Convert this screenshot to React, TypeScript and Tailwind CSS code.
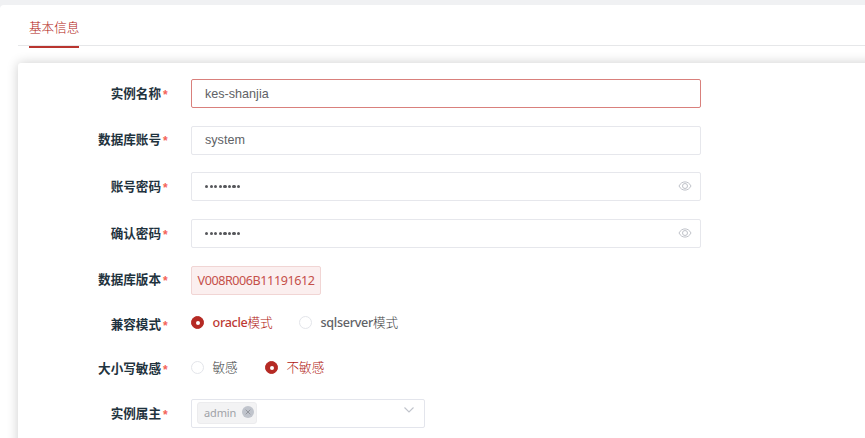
import React, { useState } from 'react';
import { clsx } from 'clsx';

interface FieldProps {
  label: string;
  className: string;
  raised?: boolean;
  children: React.ReactNode;
}

function Field({ label, className, raised, children }: FieldProps) {
  return (
    <div className={clsx('flex items-start', className)}>
      <div
        className={clsx(
          'flex w-[173px] shrink-0 items-center justify-end whitespace-nowrap pr-[22px] pt-[1px] text-[12.6px] font-bold text-[#1f333e]',
          raised ? 'h-[28.5px]' : 'h-[29px]'
        )}
      >
        {label}
        <span className="mb-[2px] ml-[2px] w-[6px] pt-[3px] font-['Liberation_Sans'] text-[12px] font-bold leading-none text-[#f4645a]">*</span>
      </div>
      {children}
    </div>
  );
}

function EyeIcon() {
  return (
    <svg viewBox="0 0 14 10" className="mb-[1px] h-[10px] w-[14px]" fill="none" stroke="#bfc2c9">
      <path d="M1 5C2.4 2.3 4.5 .9 7 .9S11.6 2.3 13 5C11.6 7.7 9.5 9.1 7 9.1S2.4 7.7 1 5Z" />
      <circle cx="7" cy="5" r="2.5" />
    </svg>
  );
}

interface InputProps {
  value: string;
  focused?: boolean;
  password?: boolean;
}

function Input({ value, focused, password }: InputProps) {
  return (
    <div
      className={clsx(
        'flex h-[29px] w-[510px] items-center justify-between rounded-[2px] border bg-white pl-[13px] pr-[8px]',
        focused ? 'border-[#d9807c] pt-[1px]' : 'border-[#e6e7ec]'
      )}
    >
      {password ? (
        <>
          <span className="flex gap-[1.4px]">
            {Array.from(value).map((_, i) => (
              <span key={i} className="h-[3.2px] w-[3.2px] rounded-full bg-[#56575b]" />
            ))}
          </span>
          <EyeIcon />
        </>
      ) : (
        <span className="font-['Liberation_Sans'] text-[12.6px] text-[#606266]">{value}</span>
      )}
    </div>
  );
}

interface RadioProps {
  label: string;
  checked: boolean;
  className?: string;
  onSelect: () => void;
}

function Radio({ label, checked, className, onSelect }: RadioProps) {
  return (
    <button onClick={onSelect} className={clsx('flex items-center whitespace-nowrap', className)}>
      <span
        className={clsx(
          'flex h-[13px] w-[13px] items-center justify-center rounded-full border',
          checked ? 'border-[#b52a24] bg-[#b52a24]' : 'border-[#e3e5ea] bg-white'
        )}
      >
        {checked && <span className="h-[4px] w-[4px] rounded-full bg-white" />}
      </span>
      <span className={clsx('ml-[8.5px] text-[12.6px] font-medium', checked ? 'text-[#bd3a34]' : 'text-[#606266]')}>
        <span className="tracking-[-0.3px]">{label.replace(/[^a-z]/g, '')}</span>
        <span className={clsx('font-light', checked ? 'text-[#b0150f]' : 'text-[#3c3e42]')}>{label.replace(/[a-z]/g, '')}</span>
      </span>
    </button>
  );
}

export default function App() {
  const [mode, setMode] = useState('oracle');
  const [sensitive, setSensitive] = useState(false);

  return (
    <div className="h-[438px] overflow-hidden bg-[#f0f1f3] pt-[5px] font-['Noto_Sans','Noto_Sans_CJK_SC',sans-serif]">
      <div className="h-full rounded-tl-[4px] bg-white pl-[18px]">
        {/* Tabs */}
        <div className="flex h-[41px] border-b border-[#e6e7e9] pl-[11px]">
          <div className="flex h-[43px] items-center border-b-2 border-[#b9352f] pt-[6px] text-[12.6px] font-light text-[#b0150f]">
            基本信息
          </div>
        </div>

        {/* Form */}
        <div className="-mr-[20px] mt-[17px] h-[400px] rounded-tl-[3px] bg-white pt-[16px] shadow-[0_0_12px_rgba(0,0,0,0.2)]">
          <Field label="实例名称" className="h-[47px]">
            <Input value="kes-shanjia" focused />
          </Field>
          <Field label="数据库账号" className="h-[46px]" raised>
            <Input value="system" />
          </Field>
          <Field label="账号密码" className="h-[47px]">
            <Input value="password" password />
          </Field>
          <Field label="确认密码" className="h-[47px]">
            <Input value="password" password />
          </Field>
          <Field label="数据库版本" className="h-[44px]" raised>
            <div className="flex h-[29px] w-[130px] items-center justify-center rounded-[2px] border border-[#f1d5d4] bg-[#fbefef] pt-[2px] text-[12.6px] tracking-[-0.44px] text-[#c5504a]">
              V008R006B11191612
            </div>
          </Field>
          <Field label="兼容模式" className="h-[45px]">
            <div className="flex h-[26px] items-center">
              <Radio label="oracle模式" checked={mode === 'oracle'} className="w-[108px]" onSelect={() => setMode('oracle')} />
              <Radio label="sqlserver模式" checked={mode === 'sqlserver'} onSelect={() => setMode('sqlserver')} />
            </div>
          </Field>
          <Field label="大小写敏感" className="h-[44px]" raised>
            <div className="flex h-[26px] items-center">
              <Radio label="敏感" checked={sensitive} className="w-[74px]" onSelect={() => setSensitive(true)} />
              <Radio label="不敏感" checked={!sensitive} onSelect={() => setSensitive(false)} />
            </div>
          </Field>
          <Field label="实例属主" className="h-[29px]">
            <div className="flex h-[29px] w-[234px] items-start justify-between rounded-[2px] border border-[#e3e5ec] pl-[5px] pr-[10px] pt-[2px]">
              <span className="flex h-[22px] w-[60px] items-center justify-between rounded-[3px] border border-[#ececee] bg-[#f3f3f4] pl-[6px] pr-[2px] text-[11px] tracking-[-0.15px] text-[#a0a2a7]">
                admin
                <svg viewBox="0 0 12 12" className="mb-[2px] h-[12px] w-[12px]">
                  <circle cx="6" cy="6" r="6" fill="#c0c4cc" />
                  <path d="M3.7 3.7L8.3 8.3M8.3 3.7L3.7 8.3" stroke="#8f9299" strokeWidth=".9" />
                </svg>
              </span>
              <svg viewBox="0 0 10 6" className="mt-[5px] h-[6px] w-[10px]" fill="none" stroke="#c0c4cc" strokeWidth="1.1">
                <path d="M.5 .5L5 5L9.5 .5" />
              </svg>
            </div>
          </Field>
        </div>
      </div>
    </div>
  );
}
